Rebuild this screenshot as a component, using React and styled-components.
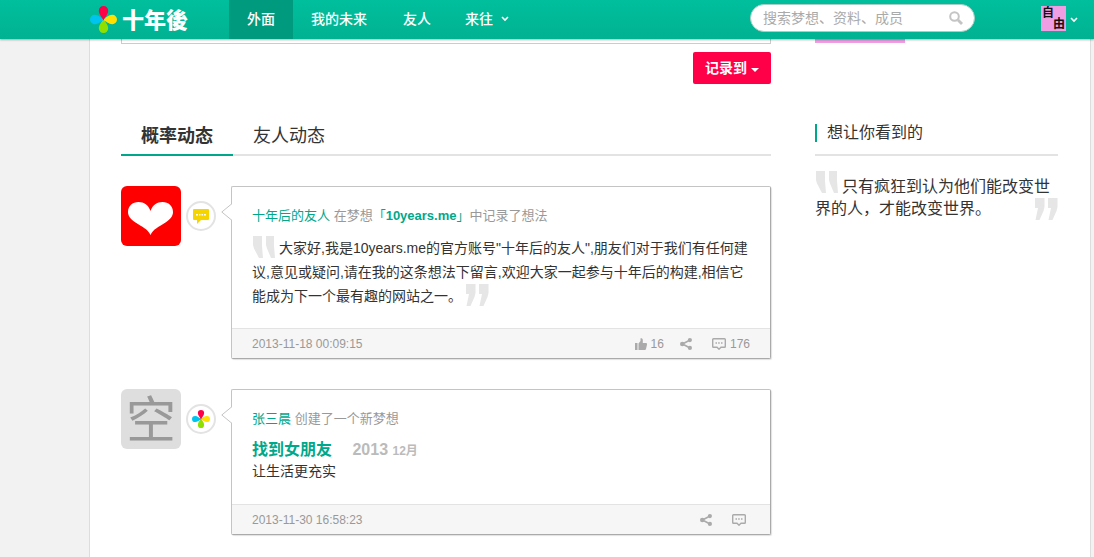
import React from 'react';
import styled, { createGlobalStyle } from 'styled-components';

const GlobalStyle = createGlobalStyle`
  * {
    box-sizing: border-box;
  }

  body {
    margin: 0;
    background: #f2f2f2;
    color: #333;
    font: 14px/24px "Liberation Sans", "Noto Sans CJK SC", sans-serif;
  }

  a {
    color: inherit;
    text-decoration: none;
  }

  button, input, textarea {
    font-family: inherit;
  }

  h2, h3, p, blockquote {
    margin: 0;
  }

  svg {
    display: block;
    flex: none;
  }
`;

const Page = styled.div`
  display: flex;
  flex-direction: column;
  min-height: 100vh;
`;

const Header = styled.header`
  position: sticky;
  top: 0;
  z-index: 1;
  display: flex;
  align-items: center;
  height: 39px;
  padding: 0 16px 0 90px;
  background: linear-gradient(#00bf9c, #00b292);
  box-shadow: 0 1px 2px rgba(0, 0, 0, 0.3);
  color: #fff;
`;

const Logo = styled.a`
  display: flex;
  align-items: center;
  gap: 5px;
  width: 139px;
  font-family: "Noto Sans CJK TC", sans-serif;
  font-size: 22px;
  font-weight: 900;

  span {
    padding-bottom: 4px;
  }
`;

const Nav = styled.nav`
  display: flex;
  flex: 1;
`;

const NavLink = styled.a`
  display: flex;
  align-items: center;
  gap: 8px;
  height: 39px;
  padding: 0 ${props => (props.$menu ? 16 : 18)}px 2px;
  background: ${props => (props.$active ? '#009a7f' : 'transparent')};
  font-weight: 500;
`;

const Search = styled.form`
  display: flex;
  align-items: center;
  width: 225px;
  height: 28px;
  margin: 0 66px 4px 0;
  padding: 0 11px 0 12px;
  border: 1px solid #a9cfc5;
  border-radius: 14px;
  background: #fff;
`;

const SearchInput = styled.input`
  flex: 1;
  min-width: 0;
  padding: 0;
  border: 0;
  outline: 0;
  background: none;
  font-size: 14px;

  &::placeholder {
    color: #aaa;
  }
`;

const IconButton = styled.button`
  display: flex;
  align-items: center;
  gap: 4px;
  padding: 0;
  border: 0;
  background: none;
  color: inherit;
  font-size: 12px;
  cursor: pointer;
`;

const UserAvatar = styled.span`
  display: flex;
  flex-direction: column;
  width: 25px;
  height: 25px;
  margin-bottom: 2px;
  padding: 2px 1px 0;
  background: #f09ee4;
  color: #111;
  font-weight: 700;
  line-height: 11px;
  text-align: left;

  span + span {
    align-self: flex-end;
  }
`;

const Sheet = styled.div`
  display: flex;
  flex: 1;
  gap: 44px;
  margin: 0 3px 0 89px;
  padding: 0 32px 22px 31px;
  border: solid #ddd;
  border-width: 0 1px;
  background: #fff;
`;

const Main = styled.main`
  flex: 1;
  min-width: 0;
`;

const Composer = styled.form`
  display: flex;
  flex-direction: column;
  align-items: flex-end;
  gap: 8px;
`;

const Draft = styled.textarea`
  width: 100%;
  height: 5px;
  padding: 0;
  border: 1px solid #ccc;
  border-top: 0;
  resize: none;
  overflow: hidden;
`;

const RecordButton = styled.button`
  display: flex;
  align-items: center;
  gap: 4px;
  height: 32px;
  padding: 0 12px 2px;
  border: 0;
  border-radius: 2px;
  background: #ff0048;
  color: #fff;
  font-size: 14px;
  font-weight: 700;
`;

const Caret = styled.span`
  margin-top: 6px;
  border: solid transparent;
  border-width: 4px 4px 0;
  border-top-color: #fff;
`;

const Tabs = styled.div`
  display: flex;
  height: 40px;
  margin: 32px 0 30px;
  box-shadow: inset 0 -2px #e3e3e3;
`;

const Tab = styled.button`
  padding: 0 20px 2px;
  border: 0;
  border-bottom: 2px solid ${props => (props.$active ? '#00a88b' : 'transparent')};
  background: none;
  color: #333;
  font-size: 18px;
  font-weight: ${props => (props.$active ? 700 : 400)};
`;

const Feed = styled.div`
  display: flex;
  flex-direction: column;
  gap: 30px;
`;

const Entry = styled.article`
  display: flex;
  align-items: flex-start;
`;

const Avatar = styled.a`
  display: flex;
  align-items: center;
  justify-content: center;
  width: 60px;
  height: 60px;
  border-radius: 6px;
  background: ${props => props.$bg};
  color: #999;
  font-size: 50px;
  line-height: 60px;

  span {
    padding-top: 4px;
  }
`;

const Badge = styled.span`
  display: flex;
  align-items: center;
  justify-content: center;
  width: 30px;
  height: 30px;
  margin: 15px 15px 0 5px;
  border: 2px solid #e3e3e3;
  border-radius: 50%;
`;

const Card = styled.div`
  position: relative;
  flex: 1;
  min-width: 0;
  border: 1px solid #c4c4c4;
  border-right-color: #aaa;
  border-bottom-color: #aaa;
  border-radius: 2px;
  box-shadow: 1px 1px 1px rgba(0, 0, 0, 0.12);
`;

const Pointer = styled.svg`
  position: absolute;
  top: 16px;
  left: -11px;
`;

const CardBody = styled.div`
  padding: 20px;
`;

const Byline = styled.p`
  margin-bottom: 11px;
  color: #999;
  font-size: 13px;
  line-height: 18px;

  a {
    color: #00a88b;
  }
`;

const Dream = styled.h3`
  color: #bbb;
  font-size: 16px;
  line-height: 21px;

  a {
    margin-right: 16px;
    color: #00a88b;
  }

  small {
    font-size: 12px;
    line-height: 12px;
  }
`;

const Summary = styled.p`
  line-height: 22px;
  padding-bottom: 2px;
`;

const CardFooter = styled.footer`
  display: flex;
  align-items: center;
  gap: 16px;
  height: 30px;
  padding: 0 20px;
  border-top: 1px solid #e3e3e3;
  background: #f6f6f6;
  color: #999;
  font-size: 12px;

  time {
    flex: 1;
  }

  svg {
    color: #aaa;
  }
`;

const Count = styled.span`
  min-height: 1px;
`;

const Aside = styled.aside`
  width: 243px;
`;

const ProfileStrip = styled.div`
  width: 90px;
  height: 4px;
  background: #f09ee4;
`;

const AsideTitle = styled.h2`
  display: flex;
  align-items: center;
  gap: 10px;
  height: 46px;
  margin: 67px 0 20px;
  padding-top: 2px;
  border-bottom: 2px solid #e3e3e3;
  font-size: 16px;
  font-weight: 400;

  &::before {
    content: "";
    width: 2px;
    height: 18px;
    background: #00a88b;
  }
`;

const Saying = styled.blockquote`
  font-size: 16px;
  line-height: 22px;
`;

const QuoteSvg = styled.svg`
  display: inline-block;
  vertical-align: top;
  margin: ${props => props.$margin || '0'};
  float: ${props => (props.$float ? 'right' : 'none')};
`;

const OpenQuote = props => (
  <QuoteSvg width="23" height="22" viewBox="0 0 23 22" fill="#e6e6e6" {...props}>
    <path d="M1 0h9v10l1 12H7L2 12.500 1 9zM14 0h8v10l1 12h-4l-4-9.500-1-3.500z" />
  </QuoteSvg>
);

const CloseQuote = props => (
  <QuoteSvg width="23" height="22" viewBox="0 0 23 22" fill="#e6e6e6" {...props}>
    <path d="M0 0h9.500v9L8.500 13 4.500 22H.5L3 10H0zM13 0h9.500v9l-1 4-4 9h-4L16 10h-3z" />
  </QuoteSvg>
);

const petal = 'M13 14C11.500 10.500 8.500 8 8.500 4.500a4.500 4.500 0 0 1 9 0C17.500 8 14.500 10.500 13 14z';

const Flower = ({ size }) => (
  <svg width={size} height={size} viewBox="0 0 26 26">
    <path d={petal} fill="#8fe000" transform="rotate(180 13 13)" />
    <path d={petal} fill="#00c4f0" transform="rotate(270 13 13)" />
    <path d={petal} fill="#ffe000" transform="rotate(90 13 13)" />
    <path d={petal} fill="#ff0048" />
  </svg>
);

const Chevron = () => (
  <svg width="8" height="6" viewBox="0 0 8 6" fill="none" stroke="#fff" strokeWidth="1.600">
    <path d="M1 1l3 3 3-3" />
  </svg>
);

const SearchIcon = () => (
  <svg width="14" height="14" viewBox="0 0 14 14" fill="none" stroke="#c4c4c4">
    <circle cx="5.500" cy="5.500" r="4.300" strokeWidth="2" />
    <path d="M9 9l4 4" strokeWidth="2.800" />
  </svg>
);

const Heart = () => (
  <svg width="60" height="60" viewBox="0 0 60 60" fill="#fff">
    <path d="M29.500 49C27 43 21 41 14.500 36.500 9.500 33 7 30 7 26c0-6 4.500-10 10.500-10 5.500 0 10 3 12 9 2-6 6.500-9 12-9C47.500 16 52 20 52 26c0 4-2.500 7-7.500 10.500C38 41 32 43 29.500 49z" />
  </svg>
);

const Bubble = () => (
  <svg width="16" height="15" viewBox="0 0 16 15" fill="#f5d400">
    <path d="M1 0h14a1 1 0 0 1 1 1v9a1 1 0 0 1-1 1H8l-4 4v-4H1a1 1 0 0 1-1-1V1a1 1 0 0 1 1-1z" />
    <path d="M3 5h2v1.500H3zM6 5h1.500v1.500H6zM8.500 5H10v1.500H8.500zM11 5h2v1.500h-2z" fill="#fff" />
  </svg>
);

const Thumb = () => (
  <svg width="12" height="12" viewBox="0 0 12 12" fill="currentColor">
    <path d="M0 5h2.500v7H0zM3.500 5.500L5.500 3V0.500C5.500 0 7.800-.3 7.800 2V5H11c1 0 1.200 1 .9 2L11 11c-.2.700-.6 1-1.200 1H3.500z" />
  </svg>
);

const Share = () => (
  <svg width="12" height="12" viewBox="0 0 12 12" fill="currentColor">
    <circle cx="2.300" cy="6" r="2.300" />
    <circle cx="9.900" cy="2.100" r="2.100" />
    <circle cx="9.900" cy="9.900" r="2.100" />
    <path d="M9.500 2.300L2.500 6l7 3.700" fill="none" stroke="currentColor" strokeWidth="1.600" />
  </svg>
);

const Comment = () => (
  <svg width="14" height="12" viewBox="0 0 14 12" fill="none" stroke="currentColor">
    <path d="M1.500.7h11a.8.8 0 0 1 .8.8v7a.8.8 0 0 1-.8.8H9L7 11.200 5 9.300H1.500a.8.8 0 0 1-.8-.8v-7a.8.8 0 0 1 .8-.8z" strokeWidth="1.400" />
    <path d="M3.500 5h1.500M6.200 5h1.500M9 5h1.500" strokeWidth="1.400" />
  </svg>
);

const Actions = ({ time, likes, comments }) => (
  <CardFooter>
    <time>{time}</time>
    {likes && (
      <IconButton aria-label="赞">
        <Thumb />
        <Count>{likes}</Count>
      </IconButton>
    )}
    <IconButton aria-label="分享">
      <Share />
      <Count />
    </IconButton>
    <IconButton aria-label="评论">
      <Comment />
      <Count>{comments}</Count>
    </IconButton>
  </CardFooter>
);

const FeedEntry = ({ avatar, bg, badge, children, ...actions }) => (
  <Entry>
    <Avatar href="#" $bg={bg}>{avatar}</Avatar>
    <Badge>{badge}</Badge>
    <Card>
      <Pointer width="11" height="18" viewBox="0 0 11 18" fill="#fff">
        <path d="M11 1L1 9l10 8z" />
        <path d="M10.500 1L.8 9l9.700 8" fill="none" stroke="#c4c4c4" />
      </Pointer>
      <CardBody>{children}</CardBody>
      <Actions {...actions} />
    </Card>
  </Entry>
);

const App = () => (
  <Page>
    <GlobalStyle />
    <Header>
      <Logo href="#">
        <Flower size={27} />
        <span>十年後</span>
      </Logo>
      <Nav>
        <NavLink href="#" $active>外面</NavLink>
        <NavLink href="#">我的未来</NavLink>
        <NavLink href="#">友人</NavLink>
        <NavLink href="#" $menu>来往 <Chevron /></NavLink>
      </Nav>
      <Search>
        <SearchInput aria-label="搜索" placeholder="搜索梦想、资料、成员" />
        <IconButton type="button" aria-label="搜索">
          <SearchIcon />
        </IconButton>
      </Search>
      <IconButton>
        <UserAvatar>
          <span>自</span>
          <span>由</span>
        </UserAvatar>
        <Chevron />
      </IconButton>
    </Header>
    <Sheet>
      <Main>
        <Composer>
          <Draft aria-label="想法" />
          <RecordButton type="button">
            记录到 <Caret />
          </RecordButton>
        </Composer>
        <Tabs>
          <Tab $active>概率动态</Tab>
          <Tab>友人动态</Tab>
        </Tabs>
        <Feed>
          <FeedEntry
            avatar={<Heart />}
            bg="#ff0000"
            badge={<Bubble />}
            time="2013-11-18 00:09:15"
            likes={16}
            comments={176}
          >
            <Byline>
              <a href="#">十年后的友人</a> 在梦想<a href="#">「<b>10years.me</b>」</a>中记录了想法
            </Byline>
            <blockquote>
              <OpenQuote $margin="0 4px 0 0" />
              大家好,我是10years.me的官方账号"十年后的友人",朋友们对于我们有任何建议,意见或疑问,请在我的这条想法下留言,欢迎大家一起参与十年后的构建,相信它能成为下一个最有趣的网站之一。
              <CloseQuote $margin="0 0 0 4px" />
            </blockquote>
          </FeedEntry>
          <FeedEntry
            avatar={<span>空</span>}
            bg="#dedede"
            badge={<Flower size={18} />}
            time="2013-11-30 16:58:23"
          >
            <Byline>
              <a href="#">张三晨</a> 创建了一个新梦想
            </Byline>
            <Dream>
              <a href="#">找到女朋友</a> 2013 <small>12月</small>
            </Dream>
            <Summary>让生活更充实</Summary>
          </FeedEntry>
        </Feed>
      </Main>
      <Aside>
        <ProfileStrip />
        <AsideTitle>想让你看到的</AsideTitle>
        <Saying>
          <OpenQuote $margin="-5px 4px 0 0" />
          只有疯狂到认为他们能改变世界的人，才能改变世界。
          <CloseQuote $float />
        </Saying>
      </Aside>
    </Sheet>
  </Page>
);

export default App;
